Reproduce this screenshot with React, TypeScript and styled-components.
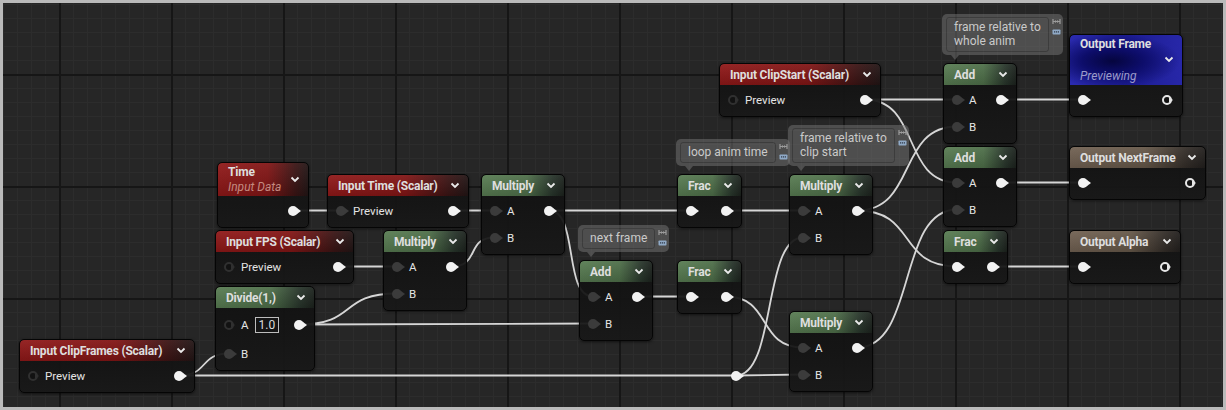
import React from 'react';
import styled, { createGlobalStyle, css } from 'styled-components';

type PinKind = 'dark' | 'hollow' | 'white' | 'ring';
type Tone = 'param' | 'math' | 'output' | 'final';
type Row = { in?: PinKind; label?: string; box?: string; out?: PinKind };
type NodeSpec = {
  id: string;
  title: string;
  sub?: string;
  tone: Tone;
  x: number;
  y: number;
  w: number;
  rows: Row[];
};
type Note = { x: number; y: number; lines: string[] };

// the canvas sits inside a 3px frame, node coords are taken from the frame
const O = 3;

const headerHeight = (n: NodeSpec) => (n.tone === 'final' ? 50 : n.sub ? 33 : 21);
const rowHeight = (r: Row) => (r.box ? 31 : 27);

// border (1) + body padding (1)
const rowY = (n: NodeSpec, i: number) => {
  let y = n.y + 1 + headerHeight(n) + 1;
  for (let k = 0; k < i; k++) y += rowHeight(n.rows[k]);
  return y + rowHeight(n.rows[i]) / 2;
};

const AB: Row[] = [
  { in: 'dark', label: 'A', out: 'white' },
  { in: 'dark', label: 'B' },
];
const preview = (pin: PinKind): Row[] => [{ in: pin, label: 'Preview', out: 'white' }];
const frac: Row[] = [{ in: 'white', out: 'white' }];
const result: Row[] = [{ in: 'white', out: 'ring' }];

const nodes: NodeSpec[] = [
  { id: 'tm', title: 'Time', sub: 'Input Data', tone: 'param', x: 217, y: 162, w: 92, rows: [{ out: 'white' }] },
  { id: 'it', title: 'Input Time (Scalar)', tone: 'param', x: 327, y: 174, w: 142, rows: preview('dark') },
  { id: 'fps', title: 'Input FPS (Scalar)', tone: 'param', x: 215, y: 230, w: 139, rows: preview('hollow') },
  {
    id: 'dv',
    title: 'Divide(1,)',
    tone: 'math',
    x: 215,
    y: 286,
    w: 100,
    rows: [
      { in: 'hollow', label: 'A', box: '1.0', out: 'white' },
      { in: 'dark', label: 'B' },
    ],
  },
  { id: 'cf', title: 'Input ClipFrames (Scalar)', tone: 'param', x: 19, y: 339, w: 176, rows: preview('hollow') },
  { id: 'm1', title: 'Multiply', tone: 'math', x: 383, y: 230, w: 84, rows: AB },
  { id: 'm2', title: 'Multiply', tone: 'math', x: 481, y: 174, w: 84, rows: AB },
  { id: 'f1', title: 'Frac', tone: 'math', x: 677, y: 174, w: 65, rows: frac },
  { id: 'm3', title: 'Multiply', tone: 'math', x: 789, y: 174, w: 84, rows: AB },
  { id: 'ad', title: 'Add', tone: 'math', x: 579, y: 260, w: 74, rows: AB },
  { id: 'f2', title: 'Frac', tone: 'math', x: 677, y: 260, w: 65, rows: frac },
  { id: 'm4', title: 'Multiply', tone: 'math', x: 789, y: 311, w: 84, rows: AB },
  { id: 'cs', title: 'Input ClipStart (Scalar)', tone: 'param', x: 719, y: 63, w: 162, rows: preview('hollow') },
  { id: 'a1', title: 'Add', tone: 'math', x: 943, y: 63, w: 74, rows: AB },
  { id: 'a2', title: 'Add', tone: 'math', x: 943, y: 146, w: 74, rows: AB },
  { id: 'f3', title: 'Frac', tone: 'math', x: 943, y: 230, w: 65, rows: frac },
  { id: 'of', title: 'Output Frame', sub: 'Previewing', tone: 'final', x: 1069, y: 34, w: 114, rows: result },
  { id: 'on', title: 'Output NextFrame', tone: 'output', x: 1069, y: 146, w: 137, rows: result },
  { id: 'oa', title: 'Output Alpha', tone: 'output', x: 1069, y: 230, w: 112, rows: result },
];

const notes: Note[] = [
  { x: 942, y: 14, lines: ['frame relative to', 'whole anim'] },
  { x: 676, y: 139, lines: ['loop anim time'] },
  { x: 788, y: 125, lines: ['frame relative to', 'clip start'] },
  { x: 578, y: 225, lines: ['next frame'] },
];

const byId = Object.fromEntries(nodes.map(n => [n.id, n]));
const outPin = (id: string, r: number) => ({ x: byId[id].x + byId[id].w - 16, y: rowY(byId[id], r) });
const inPin = (id: string, r: number) => ({ x: byId[id].x + 14, y: rowY(byId[id], r) });

const knot = { x: 736, y: rowY(byId.cf, 0) };

const links: [{ x: number; y: number }, { x: number; y: number }][] = [
  [outPin('tm', 0), inPin('it', 0)],
  [outPin('it', 0), inPin('m2', 0)],
  [outPin('fps', 0), inPin('m1', 0)],
  [outPin('dv', 0), inPin('m1', 1)],
  [outPin('dv', 0), inPin('ad', 1)],
  [outPin('m1', 0), inPin('m2', 1)],
  [outPin('cf', 0), inPin('dv', 1)],
  [outPin('cf', 0), knot],
  [knot, inPin('m4', 1)],
  [knot, inPin('m3', 1)],
  [outPin('m2', 0), inPin('f1', 0)],
  [outPin('m2', 0), inPin('ad', 0)],
  [outPin('f1', 0), inPin('m3', 0)],
  [outPin('ad', 0), inPin('f2', 0)],
  [outPin('f2', 0), inPin('m4', 0)],
  [outPin('cs', 0), inPin('a1', 0)],
  [outPin('cs', 0), inPin('a2', 0)],
  [outPin('m3', 0), inPin('a1', 1)],
  [outPin('m3', 0), inPin('f3', 0)],
  [outPin('m4', 0), inPin('a2', 1)],
  [outPin('a1', 0), inPin('of', 0)],
  [outPin('a2', 0), inPin('on', 0)],
  [outPin('f3', 0), inPin('oa', 0)],
];

const wirePath = (a: { x: number; y: number }, b: { x: number; y: number }) => {
  const x1 = a.x - O, y1 = a.y - O, x2 = b.x - O, y2 = b.y - O;
  if (Math.abs(y2 - y1) < 1.5) return `M${x1} ${y1} L${x2} ${y2}`;
  const t = Math.max(30, Math.min((x2 - x1) * 0.6, 64));
  return `M${x1} ${y1} C${x1 + t} ${y1} ${x2 - t} ${y2} ${x2} ${y2}`;
};

const GlobalStyle = createGlobalStyle`
  html, body {
    margin: 0;
    padding: 0;
    background: #bababa;
  }
  body {
    font-family: Roboto, "Noto Sans", sans-serif;
    -webkit-font-smoothing: antialiased;
  }
`;

const Frame = styled.div`
  width: 1226px;
  height: 410px;
  padding: 3px;
  box-sizing: border-box;
  background: #bababa;
`;

const Canvas = styled.div`
  position: relative;
  width: 100%;
  height: 100%;
  overflow: hidden;
  background-color: #262626;
  background-image:
    linear-gradient(to right, #161616 2px, transparent 2px),
    linear-gradient(to bottom, #161616 2px, transparent 2px),
    linear-gradient(to right, #2c2c2c 1px, transparent 1px),
    linear-gradient(to bottom, #2c2c2c 1px, transparent 1px);
  background-size: 112px 112px, 112px 112px, 14px 14px, 14px 14px;
  background-position: 56px 71px, 56px 71px, 0 1px, 0 1px;
`;

const Wires = styled.svg`
  position: absolute;
  inset: 0;
  width: 100%;
  height: 100%;
  path {
    fill: none;
    stroke: #d6d6d6;
    stroke-width: 1.8;
  }
`;

const headerTones: Record<Tone, ReturnType<typeof css>> = {
  param: css`
    background:
      linear-gradient(180deg, rgba(255, 255, 255, 0.06), rgba(0, 0, 0, 0.14)),
      linear-gradient(90deg, #901818 0%, #821515 55%, #3a1414 86%, #221515 100%);
  `,
  math: css`
    background:
      linear-gradient(180deg, rgba(255, 255, 255, 0.06), rgba(0, 0, 0, 0.14)),
      linear-gradient(90deg, #587c52 0%, #4e6f49 55%, #27342a 86%, #1c221d 100%);
  `,
  output: css`
    background:
      linear-gradient(180deg, rgba(255, 255, 255, 0.06), rgba(0, 0, 0, 0.14)),
      linear-gradient(90deg, #716152 0%, #665849 55%, #332d28 86%, #221f1d 100%);
  `,
  final: css`
    background:
      radial-gradient(ellipse 60% 55% at 38% 52%, #05053e 0%, #0d0d6a 45%, transparent 100%),
      linear-gradient(90deg, #2b2bb0 0%, #1c1c92 50%, #2727a8 100%);
  `,
};

const NodeBox = styled.div.attrs<{ $x: number; $y: number; $w: number }>(p => ({
  style: { left: p.$x - O, top: p.$y - O, width: p.$w },
}))<{ $x: number; $y: number; $w: number }>`
  position: absolute;
  box-sizing: border-box;
  border: 1px solid #050505;
  border-radius: 5px;
  overflow: hidden;
  background: linear-gradient(180deg, rgba(16, 16, 16, 0.94), rgba(24, 24, 24, 0.94));
  box-shadow: 0 1px 3px rgba(0, 0, 0, 0.55);
`;

const Header = styled.div<{ $tone: Tone; $h: number }>`
  ${p => headerTones[p.$tone]}
  height: ${p => p.$h}px;
  box-sizing: border-box;
  display: flex;
  align-items: center;
  justify-content: space-between;
  padding: 0 8px 0 10px;
  border-top-left-radius: 4px;
  border-top-right-radius: 4px;
`;

const FinalHeader = styled(Header)`
  flex-direction: column;
  align-items: stretch;
  justify-content: space-between;
  padding: 2px 8px 1px 10px;
`;

const Title = styled.div`
  color: #dedede;
  font-size: 12px;
  font-weight: 700;
  letter-spacing: -0.2px;
  line-height: 14px;
  white-space: nowrap;
`;

const TitleStack = styled.div`
  display: flex;
  flex-direction: column;
  padding-top: 1px;
`;

const Sub = styled.div<{ $tone: Tone }>`
  font-size: 12px;
  font-style: italic;
  line-height: 16px;
  color: ${p => (p.$tone === 'final' ? '#9c9cc9' : '#c48a80')};
`;

const ChevronWrap = styled.span`
  display: flex;
  align-self: center;
  svg {
    display: block;
  }
`;

const ChevronRow = styled.div`
  display: flex;
  justify-content: flex-end;
`;

const Body = styled.div`
  padding: 1px 0 3px;
`;

const RowLine = styled.div<{ $h: number }>`
  height: ${p => p.$h}px;
  display: flex;
  align-items: center;
  padding: 0 10px 0 8px;
`;

const pinKinds: Record<PinKind, ReturnType<typeof css>> = {
  dark: css`
    background: #3b3b3b;
    --tip: #3b3b3b;
  `,
  hollow: css`
    border: 2px solid #303030;
    background: #121212;
    --tip: #303030;
  `,
  white: css`
    background: #f2f2f2;
    --tip: #f2f2f2;
  `,
  ring: css`
    border: 2px solid #e6e6e6;
    background: #121212;
    --tip: #e6e6e6;
  `,
};

const Pin = styled.span<{ $kind: PinKind }>`
  position: relative;
  flex: none;
  width: 10px;
  height: 10px;
  border-radius: 50%;
  box-sizing: border-box;
  ${p => pinKinds[p.$kind]}
  &::after {
    content: '';
    position: absolute;
    top: 50%;
    right: -3px;
    margin-top: -3px;
    border-left: 4px solid var(--tip);
    border-top: 3px solid transparent;
    border-bottom: 3px solid transparent;
  }
`;

const OutPin = styled(Pin)`
  margin-left: auto;
`;

const Label = styled.span`
  margin-left: 7px;
  color: #e4e4e4;
  font-size: 11.5px;
  line-height: 14px;
`;

const ValueBox = styled.span`
  margin-left: 6px;
  padding: 0 3px;
  border: 1px solid #bdbdbd;
  color: #dcdcdc;
  font-size: 12px;
  line-height: 14px;
`;

const Knot = styled.span.attrs<{ $x: number; $y: number }>(p => ({
  style: { left: p.$x - O - 5, top: p.$y - O - 5 },
}))<{ $x: number; $y: number }>`
  position: absolute;
  display: flex;
`;

const Bubble = styled.div.attrs<{ $x: number; $y: number }>(p => ({
  style: { left: p.$x - O, top: p.$y - O },
}))<{ $x: number; $y: number }>`
  position: absolute;
  display: flex;
  gap: 3px;
  padding: 3px 2px 3px 4px;
  border-radius: 5px;
  background: rgba(118, 118, 118, 0.5);
  &::after {
    content: '';
    position: absolute;
    left: 9px;
    bottom: -5px;
    border-top: 5px solid rgba(118, 118, 118, 0.5);
    border-left: 4px solid transparent;
    border-right: 4px solid transparent;
  }
`;

const NoteText = styled.div`
  padding: 2px 7px 3px;
  border: 1px solid rgba(0, 0, 0, 0.22);
  border-radius: 3px;
  color: #cacaca;
  font-size: 12px;
  line-height: 14px;
  white-space: nowrap;
`;

const NoteIcons = styled.div`
  display: flex;
  flex-direction: column;
  gap: 4px;
  padding-top: 1px;
  svg {
    display: block;
  }
`;

const Chevron = () => (
  <ChevronWrap>
    <svg width="10" height="7" viewBox="0 0 10 7">
      <polyline points="1.5,1.5 5,5 8.5,1.5" fill="none" stroke="#eaeaea" strokeWidth="1.8" />
    </svg>
  </ChevronWrap>
);

const PinToggle = () => (
  <svg width="9" height="7" viewBox="0 0 9 7">
    <path d="M1 1v5M8 1v5M1 3.5h7" stroke="#9c9c9c" strokeWidth="1.2" fill="none" />
    <path d="M2 3.5l2-1.6v3.2zM7 3.5l-2-1.6v3.2z" fill="#9c9c9c" />
  </svg>
);

const CommentIcon = () => (
  <svg width="9" height="7" viewBox="0 0 9 7">
    <rect x="0.5" y="0.5" width="8" height="5" rx="0.8" fill="#8fa9c6" />
    <rect x="2" y="2.3" width="1.2" height="1.2" fill="#2b3440" />
    <rect x="3.9" y="2.3" width="1.2" height="1.2" fill="#2b3440" />
    <rect x="5.8" y="2.3" width="1.2" height="1.2" fill="#2b3440" />
  </svg>
);

const GraphNode = ({ node }: { node: NodeSpec }) => {
  const h = headerHeight(node);
  return (
    <NodeBox $x={node.x} $y={node.y} $w={node.w}>
      {node.tone === 'final' ? (
        <FinalHeader $tone={node.tone} $h={h}>
          <Title>{node.title}</Title>
          <ChevronRow>
            <Chevron />
          </ChevronRow>
          <Sub $tone={node.tone}>{node.sub}</Sub>
        </FinalHeader>
      ) : (
        <Header $tone={node.tone} $h={h}>
          {node.sub ? (
            <TitleStack>
              <Title>{node.title}</Title>
              <Sub $tone={node.tone}>{node.sub}</Sub>
            </TitleStack>
          ) : (
            <Title>{node.title}</Title>
          )}
          <Chevron />
        </Header>
      )}
      <Body>
        {node.rows.map((r, i) => (
          <RowLine key={i} $h={rowHeight(r)}>
            {r.in && <Pin $kind={r.in} />}
            {r.label && <Label>{r.label}</Label>}
            {r.box && <ValueBox>{r.box}</ValueBox>}
            {r.out && <OutPin $kind={r.out} />}
          </RowLine>
        ))}
      </Body>
    </NodeBox>
  );
};

export default function App() {
  return (
    <>
      <GlobalStyle />
      <Frame>
        <Canvas>
          <Wires>
            {links.map(([a, b], i) => (
              <path key={i} d={wirePath(a, b)} />
            ))}
          </Wires>
          <Knot $x={knot.x} $y={knot.y}>
            <Pin $kind="white" />
          </Knot>
          {nodes.map(n => (
            <GraphNode key={n.id} node={n} />
          ))}
          {notes.map((n, i) => (
            <Bubble key={i} $x={n.x} $y={n.y}>
              <NoteText>
                {n.lines.map((l, k) => (
                  <div key={k}>{l}</div>
                ))}
              </NoteText>
              <NoteIcons>
                <PinToggle />
                <CommentIcon />
              </NoteIcons>
            </Bubble>
          ))}
        </Canvas>
      </Frame>
    </>
  );
}
